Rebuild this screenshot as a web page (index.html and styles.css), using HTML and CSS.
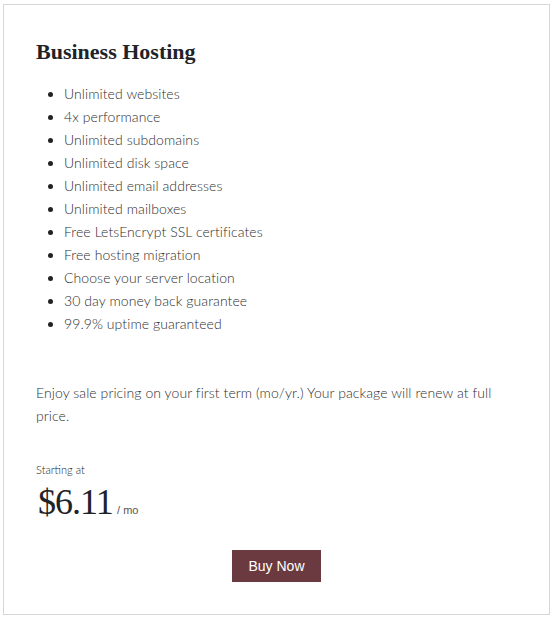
FILE: index.html
```html
<!DOCTYPE html>
<html lang="en">
<head>
    <meta charset="UTF-8">
    <meta name="viewport" content="width=device-width, initial-scale=1.0">
    <title>Business Hosting</title>
    <link rel="stylesheet" href="styles.css">
</head>
<body>
    <div class="plan-card">
        <h2 class="plan-title">Business Hosting</h2>

        <ul class="feature-list">
            <li>Unlimited websites</li>
            <li>4x performance</li>
            <li>Unlimited subdomains</li>
            <li>Unlimited disk space</li>
            <li>Unlimited email addresses</li>
            <li>Unlimited mailboxes</li>
            <li>Free LetsEncrypt SSL certificates</li>
            <li>Free hosting migration</li>
            <li>Choose your server location</li>
            <li>30 day money back guarantee</li>
            <li>99.9% uptime guaranteed</li>
        </ul>

        <p class="plan-note">Enjoy sale pricing on your first term (mo/yr.) Your package will renew at full price.</p>

        <div class="price-label">Starting at</div>
        <div class="price">
            <span class="price-amount">$6.11</span>
            <span class="price-unit">/ mo</span>
        </div>

        <div class="actions">
            <a href="#" class="buy-btn">Buy Now</a>
        </div>
    </div>
</body>
</html>
```

FILE: styles.css
```css
* {
    margin: 0;
    padding: 0;
    box-sizing: border-box;
}

body {
    font-family: Lato, 'Noto Sans', sans-serif;
    font-weight: 300;
    background: white;
    color: #2e2e2e;
    padding: 4px 4px 4px 3px;
}

.plan-card {
    width: 547px;
    height: 611px;
    border: 1px solid #d6d6d6;
    padding: 32px 32px 31px 32px;
}

.plan-title {
    font-family: 'Liberation Serif', 'Times New Roman', serif;
    font-size: 22px;
    font-weight: 700;
    line-height: 30px;
    color: #1e2328;
}

.feature-list {
    margin-top: 15px;
    padding-left: 28px;
    font-size: 14px;
    line-height: 23px;
    letter-spacing: 0.08px;
}

.feature-list li::marker {
    color: #222;
}

.plan-note {
    margin-top: 46px;
    font-size: 14px;
    line-height: 23px;
    letter-spacing: 0.08px;
}

.price-label {
    margin-top: 35px;
    font-size: 11px;
    line-height: 16px;
    color: #222;
}

.price {
    margin-top: 4px;
    height: 40px;
    line-height: 40px;
    padding-left: 2px;
}

.price-amount {
    font-family: 'Liberation Serif', 'Times New Roman', serif;
    font-size: 36px;
    font-weight: 400;
    letter-spacing: -1px;
    color: #1e2328;
}

.price-unit {
    font-family: 'Liberation Sans', Arial, sans-serif;
    font-size: 11px;
    line-height: 1;
    color: #555;
}

.actions {
    margin-top: 28px;
    text-align: center;
}

.buy-btn {
    display: inline-block;
    background: #6b3a40;
    color: white;
    font-family: 'Liberation Sans', Arial, sans-serif;
    font-size: 14px;
    font-weight: 400;
    line-height: 32px;
    padding: 0 16px;
    text-decoration: none;
}
```
